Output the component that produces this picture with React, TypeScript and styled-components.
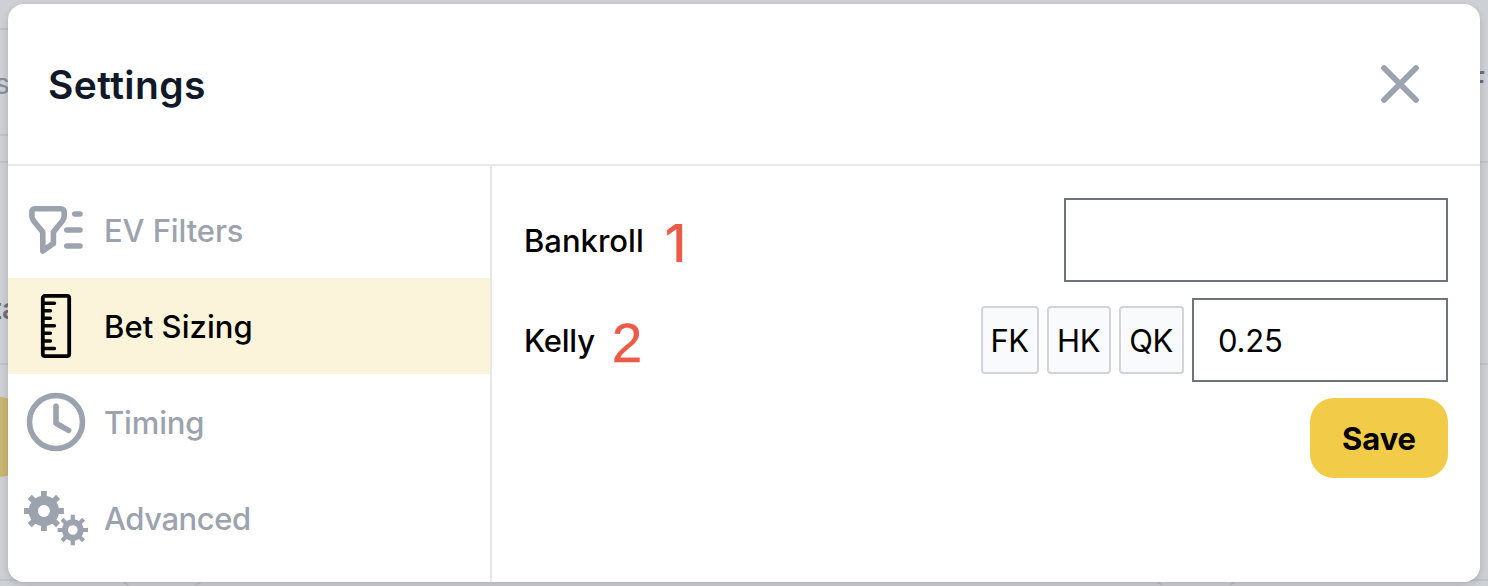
import React from 'react';
import styled, { createGlobalStyle } from 'styled-components';

const GlobalStyle = createGlobalStyle`
  *, *::before, *::after { box-sizing: border-box; }
  html, body { margin: 0; background: #cdd0d5; overflow: hidden; }
  body, button, input { font-family: Inter, "Liberation Sans", sans-serif; }
`;

const Screen = styled.div`
  position: relative;
  width: 1488px;
  height: 586px;
  padding: 4px 8px;
  overflow: hidden;
  background: #cdd0d5;
`;

const Backdrop = styled.div`
  position: absolute;
  inset: 0;
`;

const Rule = styled.div<{ $top: number; $right?: boolean }>`
  position: absolute;
  top: ${p => p.$top}px;
  ${p => (p.$right ? 'right' : 'left')}: 0;
  width: 30px;
  height: 2px;
  background: #c0c3c9;
`;

const PageText = styled.span<{ $top: number; $left: number; $strong?: boolean }>`
  position: absolute;
  top: ${p => p.$top}px;
  left: ${p => p.$left}px;
  font-size: 28px;
  line-height: 32px;
  color: ${p => (p.$strong ? '#6b707b' : '#898e98')};
  font-weight: ${p => (p.$strong ? 600 : 400)};
`;

const PageButton = styled.div`
  position: absolute;
  top: 397px;
  left: -60px;
  width: 84px;
  height: 80px;
  border-radius: 24px;
  background: #c9b573;
`;

const PageCard = styled.div<{ $left: number; $width: number }>`
  position: absolute;
  top: 579px;
  left: ${p => p.$left}px;
  width: ${p => p.$width}px;
  height: 60px;
  border: 2px solid #c0c3c9;
  border-radius: 12px;
`;

const Modal = styled.section`
  position: relative;
  display: flex;
  flex-direction: column;
  height: 578px;
  border-radius: 16px;
  background: #fff;
  overflow: hidden;
`;

const ModalShadow = styled.div`
  position: relative;
  border-radius: 16px;
  box-shadow: 0 2px 6px rgba(0, 0, 0, 0.1), 0 4px 12px rgba(0, 0, 0, 0.06);
`;

const Header = styled.header`
  display: flex;
  align-items: center;
  justify-content: space-between;
  height: 162px;
  padding: 0 56px 0 40px;
  border-bottom: 2px solid #e5e7eb;
`;

const Title = styled.h1`
  margin: 2px 0 0;
  font-size: 39px;
  line-height: 48px;
  font-weight: 600;
  letter-spacing: 0.4px;
  color: #111827;
`;

const CloseButton = styled.button`
  display: flex;
  padding: 0;
  border: 0;
  background: none;
  color: #9ca3af;
`;

const Body = styled.div`
  display: flex;
  flex: 1;
`;

const Sidebar = styled.nav`
  display: flex;
  flex-direction: column;
  width: 484px;
  padding-top: 16px;
  border-right: 2px solid #e5e7eb;
`;

const NavItem = styled.a<{ $active?: boolean; $spacing: number }>`
  display: flex;
  align-items: center;
  gap: 16px;
  height: 96px;
  padding: 0 16px;
  font-size: 31px;
  line-height: 48px;
  font-weight: 450;
  letter-spacing: ${p => p.$spacing}px;
  color: ${p => (p.$active ? '#000' : '#9ca3af')};
  background: ${p => (p.$active ? '#fcf3db' : 'transparent')};
`;

const NavLabel = styled.span`
  padding-top: 2px;
`;

const Panel = styled.main`
  display: flex;
  flex: 1;
  flex-direction: column;
  gap: 16px;
  padding: 32px;
`;

const Field = styled.div`
  display: flex;
  align-items: center;
  justify-content: space-between;
  height: 84px;
`;

const Label = styled.div<{ $spacing: number }>`
  display: flex;
  align-items: center;
  padding-top: 2px;
  font-size: 31px;
  line-height: 48px;
  font-weight: 450;
  letter-spacing: ${p => p.$spacing}px;
  color: #000;
`;

const Marker = styled.span<{ $gap: number; $plain?: boolean }>`
  margin: ${p => (p.$plain ? 5 : 3)}px 0 0 ${p => p.$gap}px;
  font-family: ${p => (p.$plain ? 'Inter' : '"Liberation Sans"')}, sans-serif;
  font-size: ${p => (p.$plain ? 52 : 55)}px;
  font-weight: ${p => (p.$plain ? 450 : 400)};
  line-height: 54px;
  letter-spacing: 0;
  color: #ec5a48;
  -webkit-text-stroke: ${p => (p.$plain ? 0 : 0.3)}px #ec5a48;
`;

const Controls = styled.div`
  display: flex;
  align-items: center;
  gap: 8px;
`;

const Preset = styled.button<{ $width: number }>`
  width: ${p => p.$width}px;
  height: 68px;
  padding: 0;
  border: 2px solid #d1d5db;
  border-radius: 4px;
  background: #f9fafb;
  font-size: 31px;
  letter-spacing: -0.4px;
  text-indent: -0.8px;
  color: #000;
`;

const Input = styled.input<{ $width: number }>`
  width: ${p => p.$width}px;
  height: 84px;
  padding: 0 24px;
  border: 2px solid #6b7280;
  border-radius: 0;
  outline: 0;
  background: #fff;
  font-size: 31px;
  letter-spacing: -0.2px;
  color: #000;
`;

const SaveButton = styled.button`
  align-self: flex-end;
  width: 138px;
  height: 80px;
  padding: 0;
  border: 0;
  border-radius: 24px;
  background: #f2cb48;
  font-size: 31px;
  font-weight: 700;
  letter-spacing: -0.1px;
  color: #000;
`;

const CloseIcon = () => (
  <svg width="48" height="48" viewBox="0 0 48 48" fill="none" stroke="currentColor" strokeWidth="5.8" strokeLinecap="round">
    <path d="M8 8 40 40M40 8 8 40" />
  </svg>
);

const FilterIcon = () => (
  <svg width="64" height="64" viewBox="0 0 64 64" fill="none" stroke="currentColor" strokeWidth="5.6" strokeLinecap="round" strokeLinejoin="round">
    <path d="M11 10.8H36.5Q40.2 10.8 40.2 14.5V18Q40.2 20.5 38.6 22.7L29.4 34V45.4L18.8 53V34L9.5 22.7Q7.9 20.5 7.9 18V14.5Q7.9 10.8 11 10.8Z" />
    <path d="M50.8 16H56M42.8 32H56M42.8 48H56" />
  </svg>
);

const RulerIcon = () => (
  <svg width="64" height="64" viewBox="0 0 64 64" fill="none" stroke="currentColor" strokeLinecap="round">
    <rect x="18.8" y="1.9" width="26.4" height="60.2" rx="2" strokeWidth="3.8" />
    <path strokeWidth="3.5" d="M19 9.2H30.4M19 16.7H26.4M19 24.3H26.4M19 31.8H30.4M19 39.3H26.4M19 46.9H26.4M19 54.5H30.4" />
  </svg>
);

const ClockIcon = () => (
  <svg width="64" height="64" viewBox="0 0 64 64" fill="none" stroke="currentColor" strokeWidth="5.6" strokeLinecap="round" strokeLinejoin="round">
    <circle cx="32" cy="32" r="26.5" />
    <path d="M32 16.4V33.2L44.6 40.4" />
  </svg>
);

const TOOTH_ANGLES = [0, 45, 90, 135];

const Gear = ({ x, y, outer, ring, hole, tooth }: { x: number; y: number; outer: number; ring: number; hole: number; tooth: number }) => {
  const inner = hole + 1;
  return (
    <g transform={`translate(${x} ${y})`} stroke="currentColor" fill="none">
      <circle r={(ring + hole) / 2} strokeWidth={ring - hole} />
      {TOOTH_ANGLES.map(a => (
        <path key={a} transform={`rotate(${a})`} strokeWidth={tooth} d={`M0 ${-outer}V${-inner}M0 ${inner}V${outer}`} />
      ))}
    </g>
  );
};

const GearsIcon = () => (
  <svg width="64" height="64" viewBox="0 0 64 64">
    <Gear x={19.9} y={25} outer={20} ring={15.2} hole={6} tooth={5.8} />
    <Gear x={48.8} y={44} outer={15.2} ring={10.8} hole={4.8} tooth={4.2} />
  </svg>
);

const NAV = [
  { label: 'EV Filters', icon: <FilterIcon />, spacing: -0.1 },
  { label: 'Bet Sizing', icon: <RulerIcon />, spacing: 0.05, active: true },
  { label: 'Timing', icon: <ClockIcon />, spacing: -0.15 },
  { label: 'Advanced', icon: <GearsIcon />, spacing: -0.45 },
];

const PRESETS = [
  { label: 'FK', width: 58 },
  { label: 'HK', width: 64 },
  { label: 'QK', width: 65 },
];

export default function App() {
  return (
    <>
      <GlobalStyle />
      <Screen>
        <Backdrop>
          <Rule $top={28} />
          <Rule $top={134} />
          <Rule $top={161} />
          <Rule $top={363} />
          <Rule $top={161} $right />
          <Rule $top={363} $right />
          <PageText $top={68} $left={-5}>s</PageText>
          <PageText $top={293} $left={-8} $strong>ta</PageText>
          <PageText $top={66} $left={1469} $strong>F</PageText>
          <PageButton />
          <PageCard $left={-20} $width={150} />
          <PageCard $left={194} $width={970} />
          <PageCard $left={1228} $width={300} />
        </Backdrop>
        <ModalShadow>
          <Modal>
            <Header>
              <Title>Settings</Title>
              <CloseButton aria-label="Close"><CloseIcon /></CloseButton>
            </Header>
            <Body>
              <Sidebar>
                {NAV.map(item => (
                  <NavItem key={item.label} $active={item.active} $spacing={item.spacing}>
                    {item.icon}
                    <NavLabel>{item.label}</NavLabel>
                  </NavItem>
                ))}
              </Sidebar>
              <Panel>
                <Field>
                  <Label $spacing={0}>Bankroll<Marker $gap={21} $plain>1</Marker></Label>
                  <Input $width={384} aria-label="Bankroll" />
                </Field>
                <Field>
                  <Label $spacing={-0.25}>Kelly<Marker $gap={17}>2</Marker></Label>
                  <Controls>
                    {PRESETS.map(p => (
                      <Preset key={p.label} $width={p.width}>{p.label}</Preset>
                    ))}
                    <Input $width={256} defaultValue="0.25" aria-label="Kelly" />
                  </Controls>
                </Field>
                <SaveButton>Save</SaveButton>
              </Panel>
            </Body>
          </Modal>
        </ModalShadow>
      </Screen>
    </>
  );
}
